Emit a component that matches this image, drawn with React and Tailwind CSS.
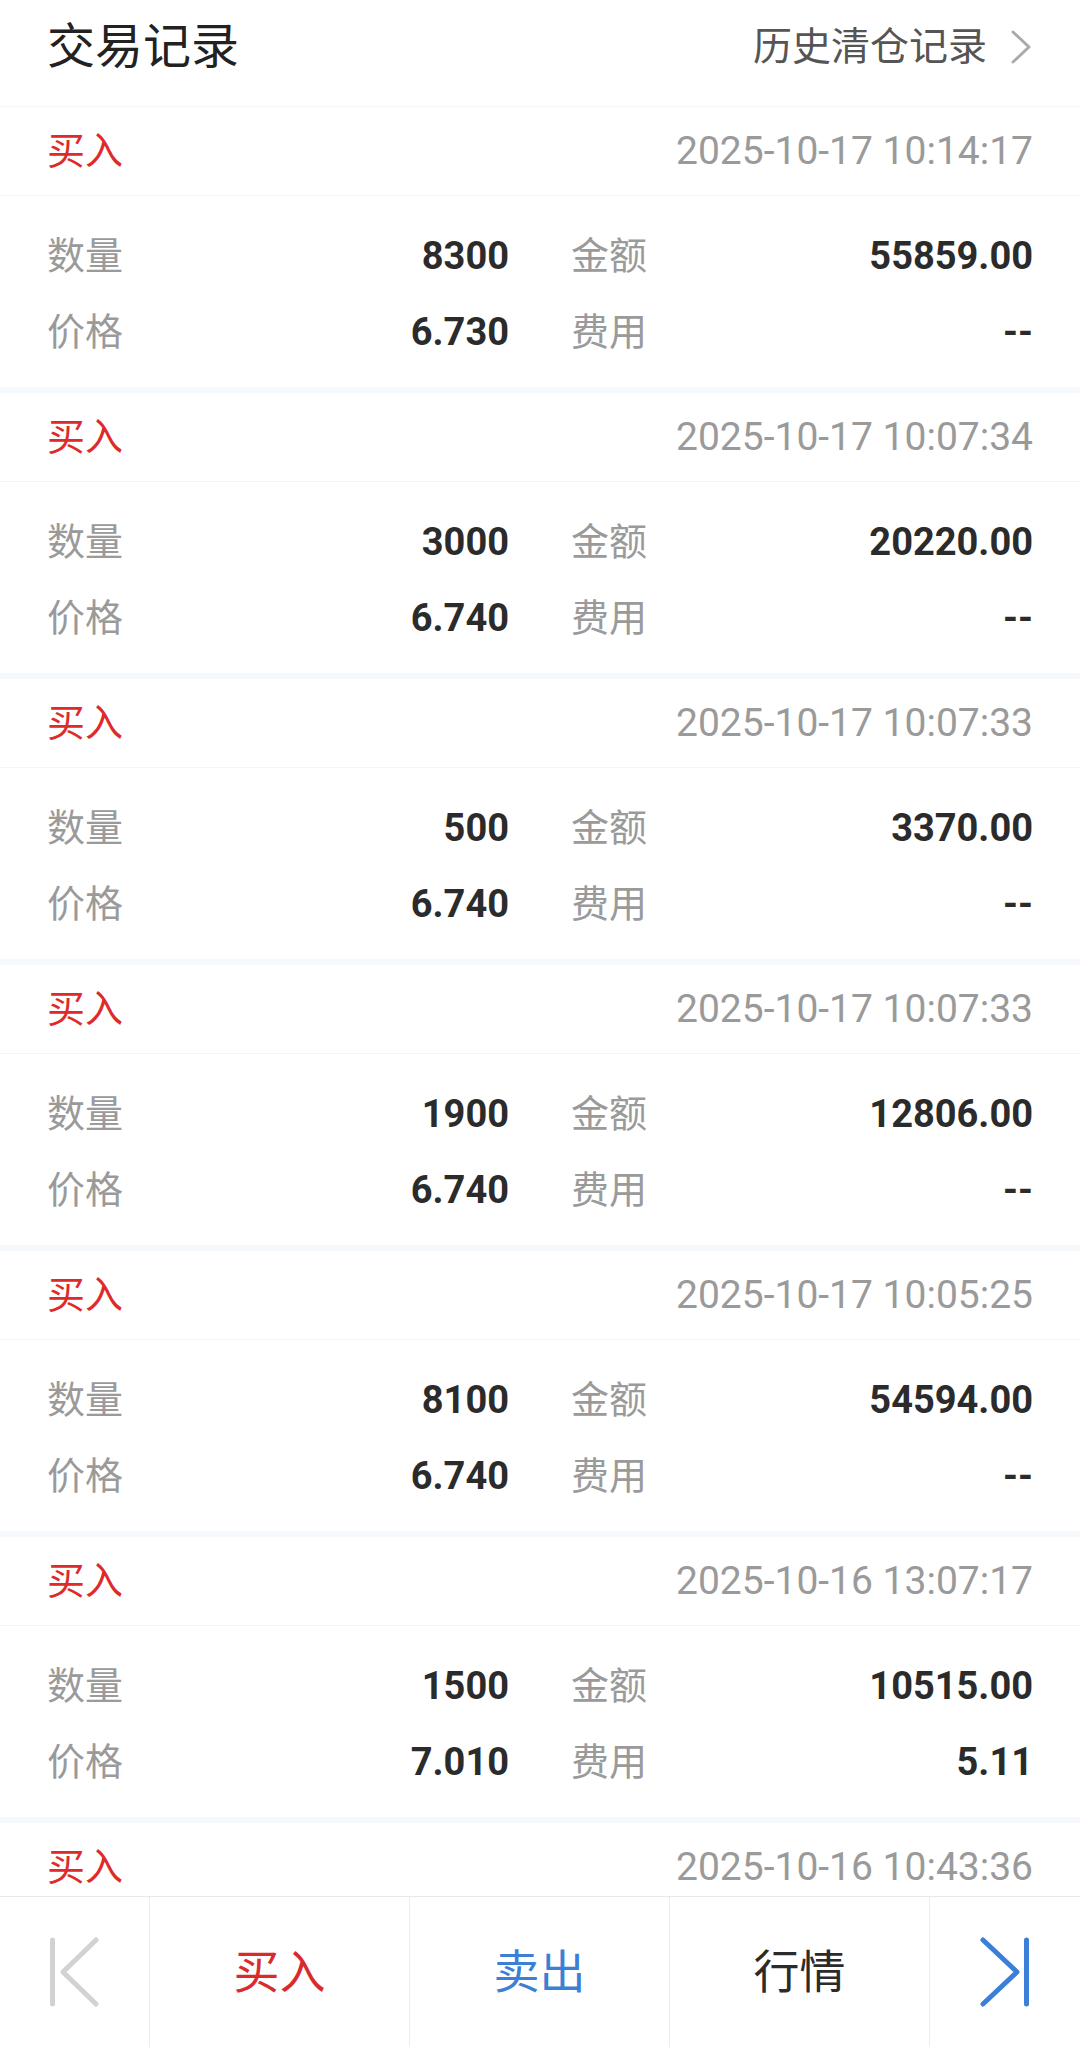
import React from 'react';

const records = [
  { time: '2025-10-17 10:14:17', qty: '8300', amount: '55859.00', price: '6.730', fee: '--' },
  { time: '2025-10-17 10:07:34', qty: '3000', amount: '20220.00', price: '6.740', fee: '--' },
  { time: '2025-10-17 10:07:33', qty: '500', amount: '3370.00', price: '6.740', fee: '--' },
  { time: '2025-10-17 10:07:33', qty: '1900', amount: '12806.00', price: '6.740', fee: '--' },
  { time: '2025-10-17 10:05:25', qty: '8100', amount: '54594.00', price: '6.740', fee: '--' },
  { time: '2025-10-16 13:07:17', qty: '1500', amount: '10515.00', price: '7.010', fee: '5.11' },
  { time: '2025-10-16 10:43:36', qty: '2000', amount: '14040.00', price: '7.020', fee: '--' },
];

const Cell = ({ label, value }) => (
  <div className="flex h-[76px] items-center justify-between">
    <span className="text-[#9a9a9a]">{label}</span>
    <span className="font-bold text-[#2b2b2b]">{value}</span>
  </div>
);

const RecordCard = ({ rec, first }) => (
  <div className={first ? '' : 'border-t-[6px] border-[#f5f8fc]'}>
    <div className="flex h-[89px] items-center justify-between border-b border-[#f5f5f5] px-[47px]">
      <span className="text-[#de2a2a]">买入</span>
      <span className="text-[39px] text-[#9a9a9a]">{rec.time}</span>
    </div>
    <div className="grid grid-cols-2 gap-x-[62px] px-[47px] pt-[22px] pb-[17px]">
      <Cell label="数量" value={rec.qty} />
      <Cell label="金额" value={rec.amount} />
      <Cell label="价格" value={rec.price} />
      <Cell label="费用" value={rec.fee} />
    </div>
  </div>
);

export default function App() {
  return (
    <div
      className="flex h-[2047px] w-[1080px] flex-col overflow-hidden bg-white text-[38px] leading-none"
      style={{ fontFamily: 'Roboto, "Noto Sans CJK SC", sans-serif' }}
    >
      {/* header */}
      <div className="h-[107px] shrink-0 border-b border-[#f7f7f7] px-[47px]">
        <div className="flex h-[94px] items-center justify-between">
          <span className="text-[48px] text-[#222]">交易记录</span>
          <div className="flex items-center gap-[22px] text-[39px] text-[#555]">
            <span>历史清仓记录</span>
            <svg width="24" height="34" viewBox="0 0 24 34" fill="none">
              <polyline points="4,2 20,17 4,32" stroke="#aaaaaa" strokeWidth="3" strokeLinecap="round" strokeLinejoin="round" />
            </svg>
          </div>
        </div>
      </div>

      {/* list */}
      <div className="min-h-0 flex-1 overflow-hidden">
        {records.map((rec, i) => (
          <RecordCard key={i} rec={rec} first={i === 0} />
        ))}
      </div>

      {/* bottom bar */}
      <div className="flex h-[151px] shrink-0 border-t border-[#e8e8e8] text-[46px]">
        <div className="flex w-[150px] items-center justify-center border-r border-[#ececec]">
          <svg width="50" height="70" viewBox="0 0 50 70" fill="none">
            <line x1="2.5" y1="3" x2="2.5" y2="67" stroke="#d2d2d2" strokeWidth="5" strokeLinecap="round" />
            <polyline points="46,3 13,35 46,67" stroke="#d2d2d2" strokeWidth="5" strokeLinecap="round" strokeLinejoin="round" />
          </svg>
        </div>
        <div className="flex flex-1 items-center justify-center border-r border-[#ececec] text-[#d92b2b]">买入</div>
        <div className="flex flex-1 items-center justify-center border-r border-[#ececec] text-[#3b7fd6]">卖出</div>
        <div className="flex flex-1 items-center justify-center border-r border-[#ececec] text-[#2b2b2b]">行情</div>
        <div className="flex w-[150px] items-center justify-center">
          <svg width="50" height="70" viewBox="0 0 50 70" fill="none">
            <polyline points="3,3 37,35 3,67" stroke="#3b7fd8" strokeWidth="5" strokeLinecap="round" strokeLinejoin="round" />
            <line x1="46.5" y1="3" x2="46.5" y2="67" stroke="#3b7fd8" strokeWidth="5" strokeLinecap="round" />
          </svg>
        </div>
      </div>
    </div>
  );
}
